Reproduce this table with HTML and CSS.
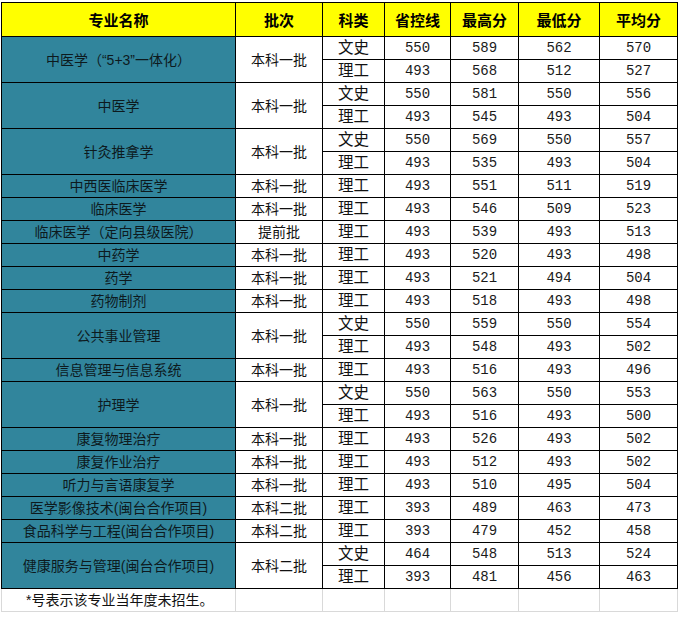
FILE: index.html
```html
<!DOCTYPE html>
<html lang="zh">
<head>
<meta charset="utf-8">
<title>录取分数</title>
<link rel="stylesheet" href="styles.css">
</head>
<body>
<div class="sheet">
<table class="scores">
<colgroup>
<col class="c-name"><col class="c-batch"><col class="c-type"><col class="c-line"><col class="c-max"><col class="c-min"><col class="c-avg">
</colgroup>
<thead>
<tr class="head"><th>专业名称</th><th>批次</th><th>科类</th><th>省控线</th><th>最高分</th><th>最低分</th><th>平均分</th></tr>
</thead>
<tbody>
<tr><td class="name" rowspan="2">中医学（“5+3”一体化）</td><td class="batch" rowspan="2">本科一批</td><td class="type">文史</td><td class="num">550</td><td class="num">589</td><td class="num">562</td><td class="num">570</td></tr>
<tr><td class="type">理工</td><td class="num">493</td><td class="num">568</td><td class="num">512</td><td class="num">527</td></tr>
<tr><td class="name" rowspan="2">中医学</td><td class="batch" rowspan="2">本科一批</td><td class="type">文史</td><td class="num">550</td><td class="num">581</td><td class="num">550</td><td class="num">556</td></tr>
<tr><td class="type">理工</td><td class="num">493</td><td class="num">545</td><td class="num">493</td><td class="num">504</td></tr>
<tr><td class="name" rowspan="2">针灸推拿学</td><td class="batch" rowspan="2">本科一批</td><td class="type">文史</td><td class="num">550</td><td class="num">569</td><td class="num">550</td><td class="num">557</td></tr>
<tr><td class="type">理工</td><td class="num">493</td><td class="num">535</td><td class="num">493</td><td class="num">504</td></tr>
<tr><td class="name">中西医临床医学</td><td class="batch">本科一批</td><td class="type">理工</td><td class="num">493</td><td class="num">551</td><td class="num">511</td><td class="num">519</td></tr>
<tr><td class="name">临床医学</td><td class="batch">本科一批</td><td class="type">理工</td><td class="num">493</td><td class="num">546</td><td class="num">509</td><td class="num">523</td></tr>
<tr><td class="name">临床医学（定向县级医院）</td><td class="batch">提前批</td><td class="type">理工</td><td class="num">493</td><td class="num">539</td><td class="num">493</td><td class="num">513</td></tr>
<tr><td class="name">中药学</td><td class="batch">本科一批</td><td class="type">理工</td><td class="num">493</td><td class="num">520</td><td class="num">493</td><td class="num">498</td></tr>
<tr><td class="name">药学</td><td class="batch">本科一批</td><td class="type">理工</td><td class="num">493</td><td class="num">521</td><td class="num">494</td><td class="num">504</td></tr>
<tr><td class="name">药物制剂</td><td class="batch">本科一批</td><td class="type">理工</td><td class="num">493</td><td class="num">518</td><td class="num">493</td><td class="num">498</td></tr>
<tr><td class="name" rowspan="2">公共事业管理</td><td class="batch" rowspan="2">本科一批</td><td class="type">文史</td><td class="num">550</td><td class="num">559</td><td class="num">550</td><td class="num">554</td></tr>
<tr><td class="type">理工</td><td class="num">493</td><td class="num">548</td><td class="num">493</td><td class="num">502</td></tr>
<tr><td class="name">信息管理与信息系统</td><td class="batch">本科一批</td><td class="type">理工</td><td class="num">493</td><td class="num">516</td><td class="num">493</td><td class="num">496</td></tr>
<tr><td class="name" rowspan="2">护理学</td><td class="batch" rowspan="2">本科一批</td><td class="type">文史</td><td class="num">550</td><td class="num">563</td><td class="num">550</td><td class="num">553</td></tr>
<tr><td class="type">理工</td><td class="num">493</td><td class="num">516</td><td class="num">493</td><td class="num">500</td></tr>
<tr><td class="name">康复物理治疗</td><td class="batch">本科一批</td><td class="type">理工</td><td class="num">493</td><td class="num">526</td><td class="num">493</td><td class="num">502</td></tr>
<tr><td class="name">康复作业治疗</td><td class="batch">本科一批</td><td class="type">理工</td><td class="num">493</td><td class="num">512</td><td class="num">493</td><td class="num">502</td></tr>
<tr><td class="name">听力与言语康复学</td><td class="batch">本科一批</td><td class="type">理工</td><td class="num">493</td><td class="num">510</td><td class="num">495</td><td class="num">504</td></tr>
<tr><td class="name">医学影像技术(闽台合作项目)</td><td class="batch">本科二批</td><td class="type">理工</td><td class="num">393</td><td class="num">489</td><td class="num">463</td><td class="num">473</td></tr>
<tr><td class="name">食品科学与工程(闽台合作项目)</td><td class="batch">本科二批</td><td class="type">理工</td><td class="num">393</td><td class="num">479</td><td class="num">452</td><td class="num">458</td></tr>
<tr><td class="name" rowspan="2">健康服务与管理(闽台合作项目)</td><td class="batch" rowspan="2">本科二批</td><td class="type">文史</td><td class="num">464</td><td class="num">548</td><td class="num">513</td><td class="num">524</td></tr>
<tr><td class="type">理工</td><td class="num">393</td><td class="num">481</td><td class="num">456</td><td class="num">463</td></tr>
<tr class="foot"><td class="note">*号表示该专业当年度未招生。</td><td></td><td></td><td></td><td></td><td></td><td></td></tr>
</tbody>
</table>
</div>
</body>
</html>
```
FILE: styles.css
```css
html, body {
  margin: 0;
  padding: 0;
  background: #ffffff;
}
.sheet {
  padding: 2px 0 0 1px;
}
.scores {
  border-collapse: collapse;
  table-layout: fixed;
  width: 677px;
  font-family: "Liberation Sans", "Noto Sans CJK SC", sans-serif;
  font-size: 14px;
  color: #111;
}
.c-name { width: 234px; }
.c-batch { width: 87px; }
.c-type { width: 62px; }
.c-line { width: 66px; }
.c-max { width: 68px; }
.c-min { width: 81px; }
.c-avg { width: 78px; }

.scores th, .scores td {
  border: 1px solid #000;
  padding: 0;
  text-align: center;
  vertical-align: middle;
  line-height: 16px;
  white-space: nowrap;
  overflow: hidden;
}
.scores tr { height: 23px; }
.scores tr.head { height: 34px; }
.scores th {
  background: #ffff00;
  font-family: "Noto Sans CJK SC", sans-serif;
  font-weight: 700;
  font-size: 15px;
  color: #000;
}
.scores td.name {
  background: #31859c;
  color: #0d1a1e;
}
.scores td.type {
  font-size: 15.5px;
}
.scores td.num {
  font-family: "Liberation Mono", "DejaVu Sans Mono", monospace;
  font-size: 14px;
  color: #1a1a1a;
}
.scores tr.foot td {
  border-color: #d9d9d9;
  border-top-color: #000;
}
.scores tr.foot td.note {
  text-align: left;
  padding-left: 24px;
}
```
